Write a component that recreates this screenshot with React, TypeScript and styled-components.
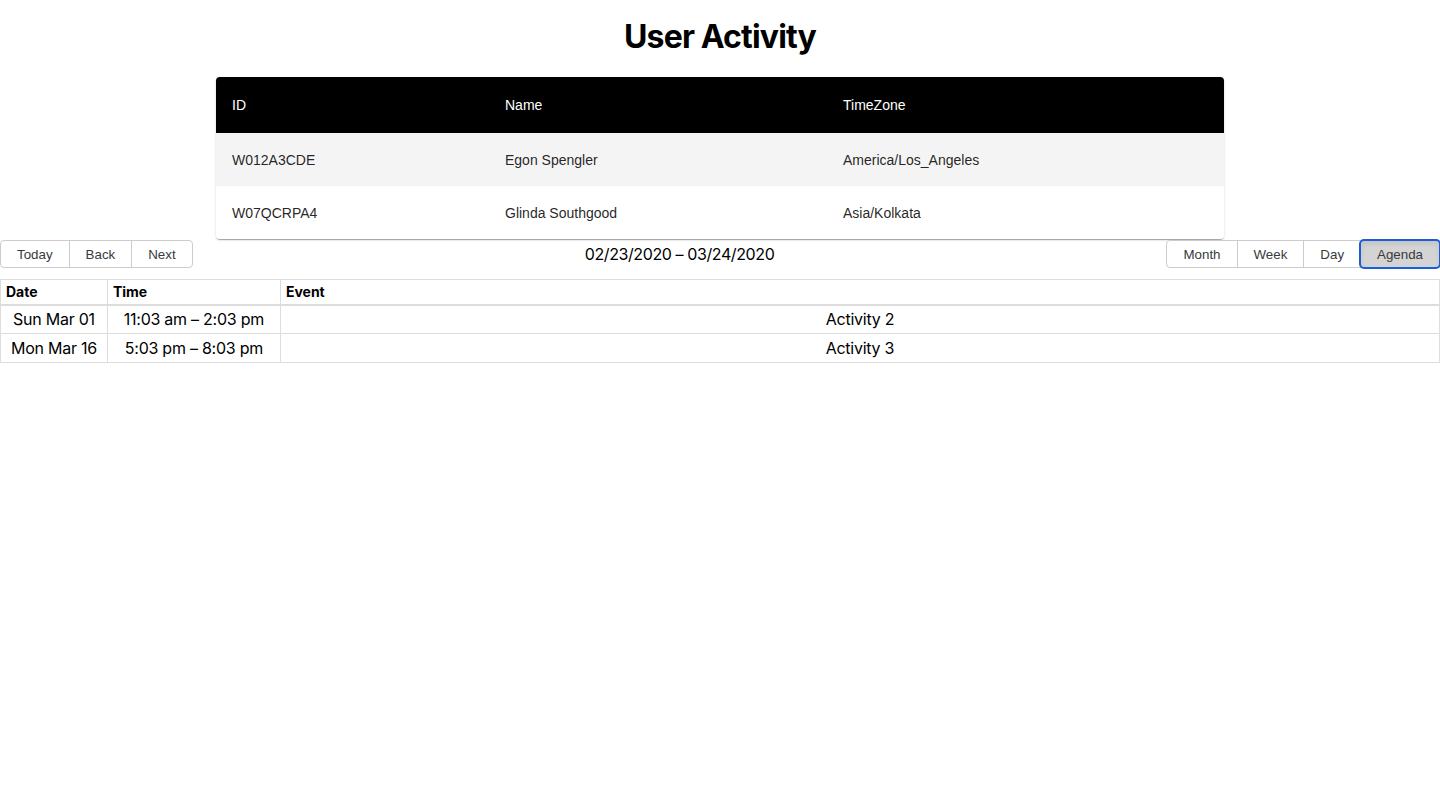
import React from "react";
import styled, { createGlobalStyle } from "styled-components";

const Global = createGlobalStyle`
  html, body { margin: 0; padding: 0; background: #fff; }
  body { font-family: Inter, "Noto Sans", sans-serif; color: #000; }
`;

const Page = styled.div`
  text-align: center;
`;

const Title = styled.h1`
  margin: 18px 0 21px;
  font-size: 32px;
  line-height: 38px;
  font-weight: 700;
  letter-spacing: -0.85px;
`;

const Paper = styled.div`
  width: 1008px;
  margin: 0 auto;
  border-radius: 4px;
  overflow: hidden;
  background: #fff;
  box-shadow: 0 2px 1px -1px rgba(0,0,0,0.2), 0 1px 1px 0 rgba(0,0,0,0.14), 0 1px 3px 0 rgba(0,0,0,0.12);
`;

const UserTable = styled.table`
  width: 100%;
  border-collapse: collapse;
  font-family: "Liberation Sans", Arial, sans-serif;
  font-size: 14px;
  text-align: left;
`;

const HeadCell = styled.th<{ $w?: number }>`
  background: #000;
  color: #fff;
  font-weight: 400;
  height: 56px;
  padding: 0 16px;
  box-sizing: border-box;
  width: ${(p) => (p.$w ? `${p.$w}px` : "auto")};
`;

const Row = styled.tr<{ $shade?: boolean }>`
  background: ${(p) => (p.$shade ? "#f4f4f4" : "#fff")};
  & + & td { border-top: 1px solid #e0e0e0; }
`;

const Cell = styled.td`
  height: 53px;
  padding: 0 16px;
  color: rgba(0,0,0,0.87);
  box-sizing: border-box;
`;

const Toolbar = styled.div`
  display: flex;
  align-items: center;
  margin: 1px 0 11px;
  font-size: 16px;
`;

const Group = styled.div`
  display: inline-flex;
`;

const Btn = styled.button<{ $active?: boolean; $pos: "first" | "mid" | "last" }>`
  font-family: "Liberation Sans", Arial, sans-serif;
  font-size: 13.33px;
  color: #373a3c;
  height: 28px;
  padding: 0 16px;
  margin: 0;
  border: 1px solid #ccc;
  background: ${(p) => (p.$active ? "#d4d4d4" : "#fff")};
  border-radius: ${(p) =>
    p.$pos === "first" ? "4px 0 0 4px" : p.$pos === "last" ? "0 4px 4px 0" : "0"};
  & + & { margin-left: -1px; }
  ${(p) =>
    p.$active
      ? `outline: 2px solid #1a5fd6; outline-offset: -1px; border-radius: 4px; box-shadow: inset 0 3px 5px rgba(0,0,0,0.08); position: relative;`
      : ""}
`;

const Label = styled.span`
  flex: 1;
  text-align: center;
  font-size: 16px;
  letter-spacing: -0.4px;
  color: #000;
`;

const Agenda = styled.table`
  width: 100%;
  border: 1px solid #ddd;
  border-collapse: collapse;
  font-size: 16px;
`;

const AHead = styled.th<{ $w?: number }>`
  text-align: left;
  font-size: 14px;
  font-weight: 700;
  padding: 3px 5px;
  height: 25px;
  box-sizing: border-box;
  border-bottom: 2px solid #ddd;
  width: ${(p) => (p.$w ? `${p.$w}px` : "auto")};
  & + & { border-left: 1px solid #ddd; }
`;

const ARow = styled.tr`
  & + & td { border-top: 1px solid #ddd; }
`;

const ACell = styled.td`
  padding: 0 10px;
  height: 29px;
  box-sizing: border-box;
  white-space: nowrap;
  letter-spacing: -0.25px;
  & + & { border-left: 1px solid #ddd; }
`;

const users = [
  { id: "W012A3CDE", name: "Egon Spengler", tz: "America/Los_Angeles" },
  { id: "W07QCRPA4", name: "Glinda Southgood", tz: "Asia/Kolkata" },
];

const events = [
  { date: "Sun Mar 01", time: "11:03 am – 2:03 pm", title: "Activity 2" },
  { date: "Mon Mar 16", time: "5:03 pm – 8:03 pm", title: "Activity 3" },
];

export default function App() {
  return (
    <Page>
      <Global />
      <Title>User Activity</Title>
      <Paper>
        <UserTable>
          <thead>
            <tr>
              <HeadCell $w={273}>ID</HeadCell>
              <HeadCell $w={338}>Name</HeadCell>
              <HeadCell>TimeZone</HeadCell>
            </tr>
          </thead>
          <tbody>
            {users.map((u, i) => (
              <Row key={u.id} $shade={i === 0}>
                <Cell>{u.id}</Cell>
                <Cell>{u.name}</Cell>
                <Cell>{u.tz}</Cell>
              </Row>
            ))}
          </tbody>
        </UserTable>
      </Paper>
      <Toolbar>
        <Group>
          <Btn $pos="first">Today</Btn>
          <Btn $pos="mid">Back</Btn>
          <Btn $pos="last">Next</Btn>
        </Group>
        <Label>02/23/2020 – 03/24/2020</Label>
        <Group>
          <Btn $pos="first">Month</Btn>
          <Btn $pos="mid">Week</Btn>
          <Btn $pos="mid">Day</Btn>
          <Btn $pos="last" $active>Agenda</Btn>
        </Group>
      </Toolbar>
      <Agenda>
        <thead>
          <tr>
            <AHead $w={105}>Date</AHead>
            <AHead $w={173}>Time</AHead>
            <AHead>Event</AHead>
          </tr>
        </thead>
        <tbody>
          {events.map((e) => (
            <ARow key={e.title}>
              <ACell>{e.date}</ACell>
              <ACell>{e.time}</ACell>
              <ACell>{e.title}</ACell>
            </ARow>
          ))}
        </tbody>
      </Agenda>
    </Page>
  );
}
